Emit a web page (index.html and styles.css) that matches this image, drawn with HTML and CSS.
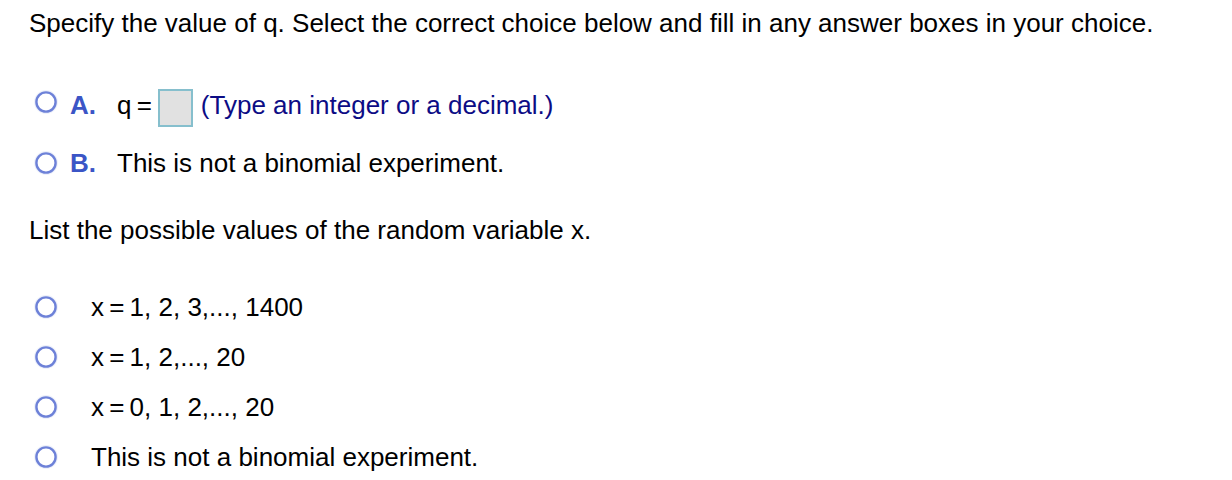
FILE: index.html
```html
<!DOCTYPE html>
<html>
<head>
<meta charset="utf-8">
<link rel="stylesheet" href="styles.css">
</head>
<body>
<div class="page">
  <p class="prompt">Specify the value of q. Select the correct choice below and fill in any answer boxes in your choice.</p>
  <div class="choices">
    <div class="choice choice-a">
      <svg class="radio" viewBox="0 0 24 24" width="24" height="24"><circle cx="12" cy="12" r="11.2" fill="none" stroke="#eef1fa" stroke-width="1.4"/><circle cx="12" cy="12" r="9.6" fill="#fff" stroke="#6d81d8" stroke-width="2.4"/></svg>
      <span class="letter">A.</span>
      <span class="expr">q&thinsp;=</span>
      <span class="answer-box"></span>
      <span class="hint">(Type an integer or a decimal.)</span>
    </div>
    <div class="choice choice-b">
      <svg class="radio" viewBox="0 0 24 24" width="24" height="24"><circle cx="12" cy="12" r="11.2" fill="none" stroke="#eef1fa" stroke-width="1.4"/><circle cx="12" cy="12" r="9.6" fill="#fff" stroke="#6d81d8" stroke-width="2.4"/></svg>
      <span class="letter">B.</span>
      <span class="expr">This is not a binomial experiment.</span>
    </div>
  </div>
  <p class="prompt list-prompt">List the possible values of the random variable x.</p>
  <div class="options">
    <div class="option">
      <svg class="radio" viewBox="0 0 24 24" width="24" height="24"><circle cx="12" cy="12" r="11.2" fill="none" stroke="#eef1fa" stroke-width="1.4"/><circle cx="12" cy="12" r="9.6" fill="#fff" stroke="#6d81d8" stroke-width="2.4"/></svg>
      <span class="opt-text">x&thinsp;=&thinsp;1, 2, 3,..., 1400</span>
    </div>
    <div class="option">
      <svg class="radio" viewBox="0 0 24 24" width="24" height="24"><circle cx="12" cy="12" r="11.2" fill="none" stroke="#eef1fa" stroke-width="1.4"/><circle cx="12" cy="12" r="9.6" fill="#fff" stroke="#6d81d8" stroke-width="2.4"/></svg>
      <span class="opt-text">x&thinsp;=&thinsp;1, 2,..., 20</span>
    </div>
    <div class="option">
      <svg class="radio" viewBox="0 0 24 24" width="24" height="24"><circle cx="12" cy="12" r="11.2" fill="none" stroke="#eef1fa" stroke-width="1.4"/><circle cx="12" cy="12" r="9.6" fill="#fff" stroke="#6d81d8" stroke-width="2.4"/></svg>
      <span class="opt-text">x&thinsp;=&thinsp;0, 1, 2,..., 20</span>
    </div>
    <div class="option">
      <svg class="radio" viewBox="0 0 24 24" width="24" height="24"><circle cx="12" cy="12" r="11.2" fill="none" stroke="#eef1fa" stroke-width="1.4"/><circle cx="12" cy="12" r="9.6" fill="#fff" stroke="#6d81d8" stroke-width="2.4"/></svg>
      <span class="opt-text">This is not a binomial experiment.</span>
    </div>
  </div>
</div>
</body>
</html>
```
FILE: styles.css
```css
html, body {
  margin: 0;
  padding: 0;
  background: #ffffff;
}
body {
  font-family: "Liberation Sans", Arial, sans-serif;
  font-size: 26px;
  color: #000;
}
.page {
  padding: 8px 0 0 29px;
}
.prompt {
  margin: 0;
  line-height: 30px;
  white-space: nowrap;
}
.choices {
  margin-top: 47px;
  display: flex;
  flex-direction: column;
  gap: 18px;
}
.choice {
  display: flex;
  align-items: center;
  height: 40px;
  padding-left: 5px;
}
.choice-a .radio {
  margin-top: -6px;
}
.radio {
  flex: none;
  display: block;
}
.letter {
  font-weight: bold;
  color: #3b55c6;
  margin-left: 12px;
  width: 47px;
}
.expr {
  white-space: nowrap;
}
.answer-box {
  box-sizing: border-box;
  width: 35px;
  height: 38px;
  margin-left: 6px;
  background: #e1e1e1;
  border: 2px solid #86bfcd;
  position: relative;
  top: 3px;
}
.hint {
  margin-left: 8px;
  color: #0c0c85;
  white-space: nowrap;
}
.list-prompt {
  margin-top: 32px;
}
.options {
  margin-top: 37px;
  display: flex;
  flex-direction: column;
}
.option {
  display: flex;
  align-items: center;
  height: 50px;
  padding-left: 5px;
}
.opt-text {
  margin-left: 33px;
  white-space: nowrap;
}
```
